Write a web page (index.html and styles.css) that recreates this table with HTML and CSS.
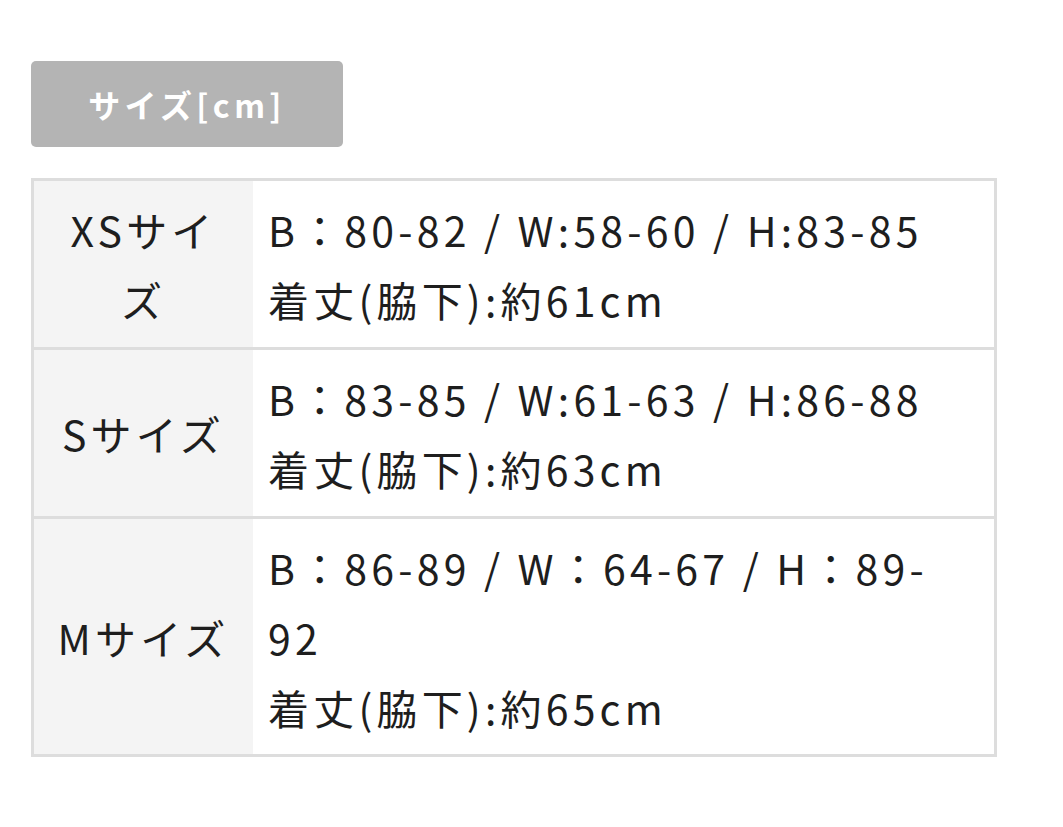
FILE: index.html
```html
<!DOCTYPE html>
<html lang="ja">
<head>
<meta charset="utf-8">
<link rel="stylesheet" href="styles.css">
</head>
<body>
<div class="page">
  <div class="label">サイズ[cm]</div>
  <table class="size-table">
    <tr>
      <th>XSサイズ</th>
      <td>B：80-82 / W:58-60 / H:83-85<br>着丈(脇下):約61cm</td>
    </tr>
    <tr>
      <th>Sサイズ</th>
      <td>B：83-85 / W:61-63 / H:86-88<br>着丈(脇下):約63cm</td>
    </tr>
    <tr>
      <th>Mサイズ</th>
      <td>B：86-89 / W：64-67 / H：89-<wbr>92<br>着丈(脇下):約65cm</td>
    </tr>
  </table>
</div>
</body>
</html>
```
FILE: styles.css
```css
html, body {
  margin: 0;
  padding: 0;
  background: #ffffff;
}
body {
  font-family: "Noto Sans CJK JP", "Noto Sans", sans-serif;
  color: #1e1e1e;
}
.page {
  padding: 61px 66px 0 31px;
}
.label {
  width: 312px;
  height: 86px;
  box-sizing: border-box;
  background: #b4b4b4;
  border-radius: 5px;
  color: #ffffff;
  font-weight: bold;
  font-size: 32px;
  letter-spacing: 4.4px;
  display: flex;
  align-items: center;
  justify-content: center;
}
.size-table {
  margin-top: 31px;
  width: 966px;
  border-collapse: collapse;
  border: 3px solid #dddddd;
  font-size: 41px;
  letter-spacing: 4.2px;
  line-height: 70px;
}
.size-table th,
.size-table td {
  border-top: 3px solid #dddddd;
  padding: 13px 14px;
  vertical-align: middle;
}
.size-table tr:last-child th,
.size-table tr:last-child td {
  padding-bottom: 12px;
}
.size-table th {
  width: 175px;
  background: #f4f4f4;
  font-weight: normal;
  text-align: center;
  padding-left: 22px;
  padding-right: 22px;
}
.size-table td {
  text-align: left;
  padding-left: 15px;
}
```
